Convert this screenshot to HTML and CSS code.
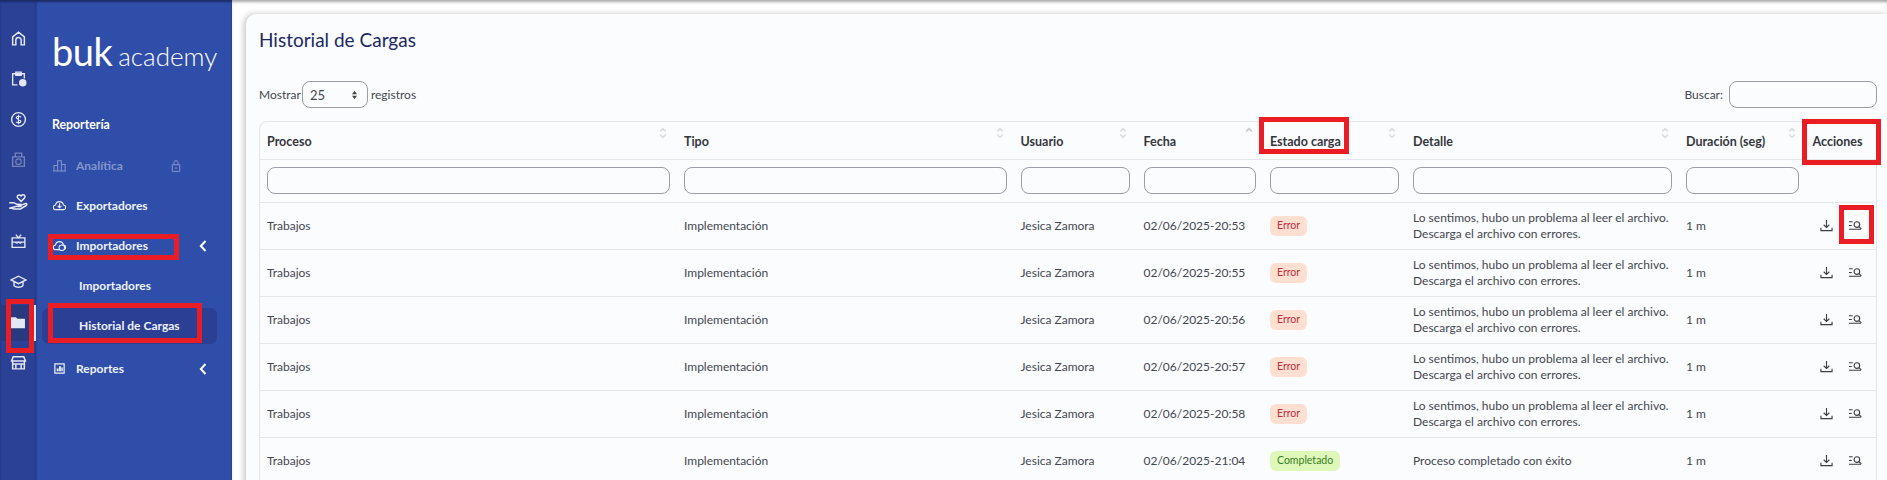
FILE: index.html
```html
<!DOCTYPE html>
<html lang="es">
<head>
  <meta charset="UTF-8">
  <meta name="viewport" content="width=device-width, initial-scale=1.0">
  <title>Historial de Cargas</title>
  <link rel="stylesheet" href="styles.css">
</head>
<body>
  <svg class="defs" width="0" height="0">
    <symbol id="sort" viewBox="0 0 10 16"><path d="M1.5 6 5 2.5 8.5 6M1.5 10 5 13.5 8.5 10" fill="none" stroke="currentColor" stroke-width="2"/></symbol>
    <symbol id="sort-up" viewBox="0 0 10 16"><path d="M1.5 6 5 2.5 8.5 6" fill="none" stroke="currentColor" stroke-width="2"/></symbol>
    <symbol id="download" viewBox="0 0 14 14"><path d="M7 1v8M4 6.2 7 9.2l3-3M1 9.5v3h12v-3" fill="none" stroke="currentColor" stroke-width="1.2"/></symbol>
    <symbol id="detail" viewBox="0 0 14 14"><path d="M0 3h4M0 7h3M0 11h13" fill="none" stroke="currentColor" stroke-width="1.1"/><circle cx="8.5" cy="6" r="3" fill="none" stroke="currentColor" stroke-width="1.2"/><path d="m10.7 8.2 2.6 2.4" stroke="currentColor" stroke-width="1.2"/></symbol>
    <symbol id="chevron" viewBox="0 0 8 12"><path d="M6.5 1 1.8 6l4.7 5" fill="none" stroke="currentColor" stroke-width="2"/></symbol>
  </svg>

  <nav class="rail">
    <a class="rail-item"><svg viewBox="0 0 16 16"><path d="M2.5 14V6.500L8 2l5.500 4.500V14h-3V9.500a2.500 2.500 0 0 0-5 0V14z" fill="none" stroke="currentColor" stroke-width="1.400"/></svg></a>
    <a class="rail-item"><svg viewBox="0 0 16 16"><path d="M7 14H2.500V3.500h11V8M5.500 2h5v3h-5z" fill="none" stroke="currentColor" stroke-width="1.300"/><circle cx="12" cy="12" r="3.500" fill="currentColor"/></svg></a>
    <a class="rail-item"><svg viewBox="0 0 16 16"><circle cx="8" cy="8" r="6.500" fill="none" stroke="currentColor" stroke-width="1.300"/><path d="M10.300 5.800C9.800 4.800 6 4.400 5.900 6.200c-.1 2 4.400 1.400 4.300 3.600-.1 1.800-3.900 1.500-4.500.4M8 3.500v9" fill="none" stroke="currentColor" stroke-width="1.100"/></svg></a>
    <a class="rail-item rail-dim"><svg viewBox="0 0 16 16"><path d="M2.500 5.500h11v9h-11zM5 5.500V2h6v3.500" fill="none" stroke="currentColor" stroke-width="1.300"/><circle cx="8" cy="10" r="2.600" fill="none" stroke="currentColor" stroke-width="1.100"/></svg></a>
    <a class="rail-item rail-hand"><svg viewBox="0 0 16 16"><path d="M1 8.500h3.500l2.500 1.200h2.800c1.200 0 1.200 1.800 0 1.800H7.500M10.500 10.500l3.500-1.300c1-.2 1.500 1 .6 1.600L10 13.500H4.500L3.500 13H1z" fill="none" stroke="currentColor" stroke-width="1.200"/><path d="M10.500 7.500 7.800 4.800c-1.300-1.500.9-3.500 2.700-1.700 1.800-1.800 4-.2 2.700 1.700z" fill="none" stroke="currentColor" stroke-width="1.200"/></svg></a>
    <a class="rail-item"><svg viewBox="0 0 16 16"><path d="M2 5.500h12v9H2zM2 9.500h12M5.500 2.500 8 5.500l2.500-3" fill="none" stroke="currentColor" stroke-width="1.300"/><path d="M5 9.500c1 1.500 1.500 1.500 3 0 1.500 1.500 2 1.500 3 0" fill="none" stroke="currentColor" stroke-width="1"/></svg></a>
    <a class="rail-item"><svg viewBox="0 0 16 16"><path d="M1 6.500 8 3l7 3.500L8 10zM3.800 8.500V12c2 1.800 6.400 1.800 8.400 0V8.500" fill="none" stroke="currentColor" stroke-width="1.300"/></svg></a>
    <a class="rail-item rail-active"><svg viewBox="0 0 16 16"><path d="M1 3h5.500l1.500 1.500h7V13.500H1z" fill="currentColor"/></svg></a>
    <a class="rail-item rail-store"><svg viewBox="0 0 16 16"><path d="M1.500 6.500 3 2.500h10l1.500 4zM2.500 6.500V14h11V6.500M2.500 9.500h11M5.500 14V9.500M10.500 14V9.500" fill="none" stroke="currentColor" stroke-width="1.400"/></svg></a>
  </nav>

  <aside class="sidebar">
    <div class="logo"><span class="logo-buk">buk</span><span class="logo-academy">academy</span></div>
    <p class="side-title">Reportería</p>
    <ul class="side-menu">
      <li class="side-item dim">
        <svg class="side-icon" viewBox="0 0 14 14"><path d="M1 13V7h4v6M5 13V2h4v11M9 13V6h4v7M0 13h14" fill="none" stroke="currentColor" stroke-width="1.100"/></svg>
        <span class="side-label">Analítica</span>
        <svg class="side-lock" viewBox="0 0 12 14"><path d="M1.500 5.500h9v8h-9zM3.500 5.500V3a2.500 2.500 0 0 1 5 0v2.500" fill="none" stroke="currentColor" stroke-width="1.200"/><circle cx="6" cy="9.500" r="1.100" fill="currentColor"/></svg>
      </li>
      <li class="side-item">
        <svg class="side-icon" viewBox="0 0 14 14"><path d="M3.500 11.500H3a2.500 2.500 0 0 1-.3-5 4.300 4.300 0 0 1 8.500 0 2.500 2.500 0 0 1-.2 5z" fill="none" stroke="currentColor" stroke-width="1.200"/><path d="M7 4.500v4.500M5 7.500 7 9.500l2-2" fill="none" stroke="currentColor" stroke-width="1.200"/></svg>
        <span class="side-label">Exportadores</span>
      </li>
      <li class="side-item">
        <svg class="side-icon" viewBox="0 0 14 14"><path d="M3.500 11.500H3a2.500 2.500 0 0 1-.3-5 4.300 4.300 0 0 1 8.500 0 2.500 2.500 0 0 1-.2 5z" fill="none" stroke="currentColor" stroke-width="1.200"/><circle cx="9.500" cy="9.500" r="3" fill="#2f4ea9" stroke="currentColor" stroke-width="1.100"/></svg>
        <span class="side-label">Importadores</span>
        <svg class="side-chevron"><use href="#chevron"/></svg>
      </li>
      <li class="side-sub">Importadores</li>
      <li class="side-sub active">Historial de Cargas</li>
      <li class="side-item">
        <svg class="side-icon" viewBox="0 0 14 14"><path d="M2 2h10v10H2z" fill="none" stroke="currentColor" stroke-width="1.300"/><path d="M4 10V7h2v3zM6.500 10V4.500h2V10zM9 10V6h1.500v4z" fill="currentColor"/></svg>
        <span class="side-label">Reportes</span>
        <svg class="side-chevron"><use href="#chevron"/></svg>
      </li>
    </ul>
  </aside>

  <main class="main">
    <section class="card">
      <h1 class="card-title">Historial de Cargas</h1>
      <div class="table-tools">
        <label class="tool">Mostrar
          <select class="page-size"><option>25</option></select>
          registros</label>
        <label class="tool">Buscar:
          <input class="search" type="text">
        </label>
      </div>

      <div class="table-wrap">
        <table class="data-table">
          <colgroup>
            <col class="c-proceso"><col class="c-tipo"><col class="c-usuario"><col class="c-fecha">
            <col class="c-estado"><col class="c-detalle"><col class="c-duracion"><col class="c-acciones">
          </colgroup>
          <thead>
            <tr class="head-row">
              <th><div class="th-in">Proceso<svg class="sort"><use href="#sort"/></svg></div></th>
              <th><div class="th-in">Tipo<svg class="sort"><use href="#sort"/></svg></div></th>
              <th><div class="th-in">Usuario<svg class="sort"><use href="#sort"/></svg></div></th>
              <th><div class="th-in">Fecha<svg class="sort sort-on"><use href="#sort-up"/></svg></div></th>
              <th><div class="th-in">Estado carga<svg class="sort"><use href="#sort"/></svg></div></th>
              <th><div class="th-in">Detalle<svg class="sort"><use href="#sort"/></svg></div></th>
              <th><div class="th-in">Duración (seg)<svg class="sort"><use href="#sort"/></svg></div></th>
              <th><div class="th-in">Acciones</div></th>
            </tr>
            <tr class="filter-row">
              <td><input class="filter" type="text"></td>
              <td><input class="filter" type="text"></td>
              <td><input class="filter" type="text"></td>
              <td><input class="filter" type="text"></td>
              <td><input class="filter" type="text"></td>
              <td><input class="filter" type="text"></td>
              <td><input class="filter" type="text"></td>
              <td></td>
            </tr>
          </thead>
          <tbody>
            <tr>
              <td>Trabajos</td><td>Implementación</td><td>Jesica Zamora</td><td>02/06/2025-20:53</td>
              <td><span class="badge badge-error">Error</span></td>
              <td>Lo sentimos, hubo un problema al leer el archivo.<br>Descarga el archivo con errores.</td>
              <td>1 m</td>
              <td><div class="actions"><svg class="act"><use href="#download"/></svg><svg class="act"><use href="#detail"/></svg></div></td>
            </tr>
            <tr>
              <td>Trabajos</td><td>Implementación</td><td>Jesica Zamora</td><td>02/06/2025-20:55</td>
              <td><span class="badge badge-error">Error</span></td>
              <td>Lo sentimos, hubo un problema al leer el archivo.<br>Descarga el archivo con errores.</td>
              <td>1 m</td>
              <td><div class="actions"><svg class="act"><use href="#download"/></svg><svg class="act"><use href="#detail"/></svg></div></td>
            </tr>
            <tr>
              <td>Trabajos</td><td>Implementación</td><td>Jesica Zamora</td><td>02/06/2025-20:56</td>
              <td><span class="badge badge-error">Error</span></td>
              <td>Lo sentimos, hubo un problema al leer el archivo.<br>Descarga el archivo con errores.</td>
              <td>1 m</td>
              <td><div class="actions"><svg class="act"><use href="#download"/></svg><svg class="act"><use href="#detail"/></svg></div></td>
            </tr>
            <tr>
              <td>Trabajos</td><td>Implementación</td><td>Jesica Zamora</td><td>02/06/2025-20:57</td>
              <td><span class="badge badge-error">Error</span></td>
              <td>Lo sentimos, hubo un problema al leer el archivo.<br>Descarga el archivo con errores.</td>
              <td>1 m</td>
              <td><div class="actions"><svg class="act"><use href="#download"/></svg><svg class="act"><use href="#detail"/></svg></div></td>
            </tr>
            <tr>
              <td>Trabajos</td><td>Implementación</td><td>Jesica Zamora</td><td>02/06/2025-20:58</td>
              <td><span class="badge badge-error">Error</span></td>
              <td>Lo sentimos, hubo un problema al leer el archivo.<br>Descarga el archivo con errores.</td>
              <td>1 m</td>
              <td><div class="actions"><svg class="act"><use href="#download"/></svg><svg class="act"><use href="#detail"/></svg></div></td>
            </tr>
            <tr>
              <td>Trabajos</td><td>Implementación</td><td>Jesica Zamora</td><td>02/06/2025-21:04</td>
              <td><span class="badge badge-ok">Completado</span></td>
              <td>Proceso completado con éxito</td>
              <td>1 m</td>
              <td><div class="actions"><svg class="act"><use href="#download"/></svg><svg class="act"><use href="#detail"/></svg></div></td>
            </tr>
          </tbody>
        </table>
      </div>
    </section>
  </main>

  <!-- red marks drawn over the screenshot -->
  <div class="mark mark-folder"></div>
  <div class="mark mark-import"></div>
  <div class="mark mark-hist"></div>
  <div class="mark mark-estado"></div>
  <div class="mark mark-acciones"></div>
  <div class="mark mark-icon"></div>
</body>
</html>
```

FILE: styles.css
```css
* {
  box-sizing: border-box;
}

body {
  margin: 0;
  height: 480px;
  overflow: hidden;
  display: flex;
  background: #fff;
  color: #44474f;
  font-family: "Lato", "Open Sans", sans-serif;
  font-size: 12px;
}

.defs {
  position: absolute;
}

/* icon rail */
.rail {
  width: 36px;
  flex: none;
  padding-top: 18px;
  background: #2a4196;
  color: #e4e8f4;
  box-shadow: inset 0 2px 2px #1c2c66;
}

.rail-item {
  height: 40.500px;
  display: flex;
  align-items: center;
  justify-content: center;
}

.rail-item svg {
  width: 17px;
  height: 17px;
}

.rail-item.rail-hand {
  padding-top: 4px;
}

.rail-item.rail-hand svg {
  width: 20px;
  height: 20px;
}

.rail-item.rail-store {
  padding-top: 2px;
}

.rail-dim {
  opacity: .4;
}

.rail-active {
  background: #28397f;
  border-right: 2px solid #e4e8f4;
  height: 36px;
  margin: 3px 0 1px;
}

/* text menu */
.sidebar {
  width: 196px;
  flex: none;
  background: #2f4ea9;
  color: #eef1f9;
  padding: 2px 15px 0 6px;
  box-shadow: inset 0 2px 2px #1c2c66;
}

.logo {
  height: 61px;
  margin: 32px 0 0 10px;
  color: #fff;
  white-space: nowrap;
  display: flex;
  align-items: baseline;
  line-height: 34px;
}

.logo-buk {
  font-size: 38px;
  font-weight: 400;
  letter-spacing: -.5px;
}

.logo-academy {
  font-size: 26px;
  font-weight: 300;
  margin-left: 6px;
}

.side-title {
  margin: 22px 0 0 10px;
  font-size: 12.300px;
  font-weight: 700;
  color: #fff;
  line-height: 16px;
}

.side-menu {
  list-style: none;
  margin: 12.500px 0 0;
  padding: 0;
  font-size: 12px;
  font-weight: 700;
}

.side-item {
  height: 40px;
  padding-left: 11px;
  display: flex;
  align-items: center;
}

.dim {
  color: #8595cc;
}

.side-icon {
  width: 13px;
  height: 13px;
  flex: none;
}

.side-label {
  margin-left: 10px;
  flex: 1;
}

.side-lock {
  width: 10px;
  height: 12px;
  margin-right: 36px;
}

.side-chevron {
  width: 8px;
  height: 12px;
  margin-right: 10px;
  color: #fff;
}

.side-sub {
  height: 40px;
  line-height: 40px;
  padding-left: 37px;
}

.side-sub.active {
  height: 36px;
  line-height: 36px;
  margin: 2px 0 5px;
  background: #2b3f94;
  border-radius: 7px;
}

/* content */
.main {
  flex: 1;
  min-width: 0;
  padding: 14px 0 0 14px;
  box-shadow: inset 0 3px 3px -1px #a8a8a8;
}

.card {
  height: 480px;
  background: #fbfcfe;
  border-radius: 10px 0 0 0;
  padding: 14px 10px 0 13px;
  box-shadow: -2px 0 6px #c4c4c4;
}

.card-title {
  margin: 0;
  font-size: 19px;
  font-weight: 400;
  line-height: 24px;
  color: #1b2862;
}

.table-tools {
  margin-top: 29px;
  height: 40px;
  display: flex;
  justify-content: space-between;
}

.tool {
  height: 27px;
  display: flex;
  align-items: center;
  gap: 3px;
}

.page-size {
  width: 66px;
  height: 27px;
  margin-left: -2px;
  padding: 1px 0 0 7px;
  appearance: none;
  border: 1px solid #9b9ea6;
  border-radius: 8px;
  background: transparent url("data:image/svg+xml,%3Csvg xmlns='http://www.w3.org/2000/svg' viewBox='0 0 8 12'%3E%3Cpath d='M4 1 7 5H1zM4 11 1 7h6z' fill='%23444'/%3E%3C/svg%3E") no-repeat right 9px center / 7px 10px;
  color: #44474f;
  font: inherit;
  font-size: 13px;
}

.search {
  width: 148px;
  height: 27px;
  margin-left: 3px;
  border: 1px solid #9b9ea6;
  border-radius: 8px;
  background: transparent;
}

.table-wrap {
  border: 1px solid #e5e6ea;
  border-bottom: none;
  border-radius: 8px 0 0 0;
}

.data-table {
  width: 100%;
  table-layout: fixed;
  border-collapse: collapse;
}

.c-proceso { width: 417px; }
.c-tipo { width: 336.500px; }
.c-usuario { width: 123px; }
.c-fecha { width: 126.500px; }
.c-estado { width: 143px; }
.c-detalle { width: 273px; }
.c-duracion { width: 126.500px; }

.data-table td {
  padding: 0 7px;
  height: 47px;
  border-bottom: 1px solid #e5e6ea;
  line-height: 16px;
}

.data-table th {
  padding: 3px 7px 0;
  height: 37px;
  border-bottom: 1px solid #e5e6ea;
  text-align: left;
  font-size: 12.500px;
  font-weight: 700;
  color: #34363c;
}

.th-in {
  display: flex;
  justify-content: space-between;
  white-space: nowrap;
  line-height: 16px;
}

.sort {
  width: 8px;
  height: 14px;
  margin: -8px 3px 0 0;
  color: #dcdde1;
}

.sort-on {
  color: #c9cbd1;
}

.filter-row td {
  height: 43px;
  padding: 0 7px;
}

.filter {
  display: block;
  width: 100%;
  height: 27px;
  border: 1px solid #9b9ea6;
  border-radius: 8px;
  background: transparent;
}

.badge {
  display: inline-block;
  height: 20px;
  padding: 0 7px;
  border-radius: 6px;
  font-size: 10.500px;
  line-height: 18px;
}

.badge-error {
  background: #ffdfcf;
  color: #bf2f3d;
}

.badge-ok {
  background: #dff7b9;
  color: #34801f;
}

.actions {
  display: flex;
  justify-content: flex-end;
  gap: 16px;
  padding-right: 7px;
}

.act {
  width: 13px;
  height: 13px;
  color: #3c3e44;
}

/* annotation boxes */
.mark {
  position: absolute;
  border: 5px solid #ea1c24;
}

.mark-folder { left: 6px; top: 299px; width: 28px; height: 54px; }
.mark-import { left: 48px; top: 234px; width: 131px; height: 26px; }
.mark-hist { left: 48px; top: 303px; width: 154px; height: 40px; }
.mark-estado { left: 1259px; top: 117px; width: 90px; height: 37px; }
.mark-acciones { left: 1802px; top: 119px; width: 79px; height: 46px; }
.mark-icon { left: 1839px; top: 205px; width: 35px; height: 39px; }
```
